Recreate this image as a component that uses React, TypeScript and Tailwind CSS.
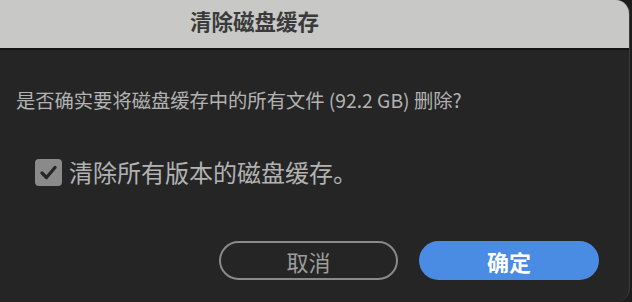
import React from 'react'

export default function App() {
  return (
    <main className="w-[632px] h-[302px] bg-[#1d1d1d] overflow-hidden" style={{ fontFamily: '"Noto Sans CJK SC", "Noto Sans", sans-serif' }}>
      <div className="w-[630px] h-[302px] bg-[#252525] rounded-tr-[14px] rounded-br-[14px] border-r border-[#3c3c3c] overflow-hidden flex flex-col">
        <div className="h-[50px] bg-[#c8c8c6] border-b-2 border-[#141414] flex items-center pl-[190px] pb-[6px]">
          <span className="text-[21.5px] font-bold text-[#3a3a3a] leading-none">清除磁盘缓存</span>
        </div>

        <div className="pl-[16px] pt-[37px] text-[19.3px] leading-[26px] text-[#b3b3b3]">
          是否确实要将磁盘缓存中的所有文件 (92.2 GB) 删除?
        </div>

        <div className="flex items-center pl-[35px] pt-[45px] gap-[7px]">
          <div className="w-[27px] h-[27px] rounded-[4px] bg-[#8a8a8a] flex items-center justify-center">
            <svg width="17" height="15" viewBox="0 0 17 15" fill="none">
              <path d="M2 8 L6.5 12.5 L15 2.5" stroke="#262626" strokeWidth="3.2" strokeLinecap="round" strokeLinejoin="round" />
            </svg>
          </div>
          <span className="text-[24px] leading-[28px] text-[#b3b3b3]">清除所有版本的磁盘缓存。</span>
        </div>

        <div className="flex justify-end gap-[21px] pr-[30px] pt-[55px]">
          <button type="button" className="w-[179px] h-[39px] rounded-full border-2 border-[#8a8a8a] text-[22px] leading-none text-[#9d9d9d] flex items-center justify-center">
            取消
          </button>
          <button type="button" className="w-[180px] h-[39px] rounded-full bg-[#4a8be3] text-[22px] leading-none font-bold text-white flex items-center justify-center">
            确定
          </button>
        </div>
      </div>
    </main>
  )
}
